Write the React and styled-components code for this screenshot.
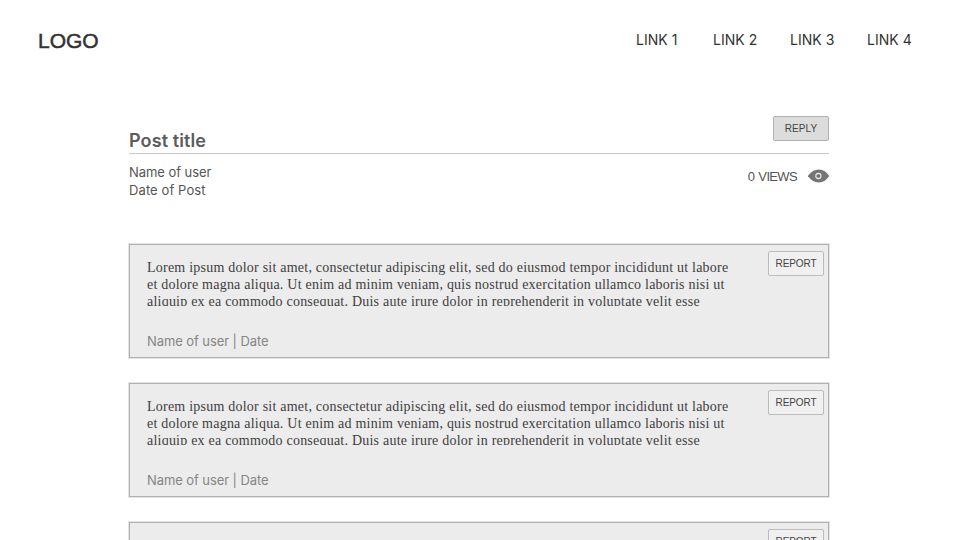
import React from 'react';
import styled, { createGlobalStyle } from 'styled-components';

const GlobalStyle = createGlobalStyle`
  * { box-sizing: border-box; }
  html, body { margin: 0; height: 100%; overflow: hidden; background: #fff; }
  body { font-family: Inter, "Liberation Sans", Arial, sans-serif; color: #333; }
`;

const Page = styled.div`
  height: 540px;
  overflow: hidden;
`;

const Header = styled.header`
  display: flex;
  justify-content: space-between;
  align-items: center;
  height: 80px;
  padding: 0 15px 0 38px;
`;

const Logo = styled.div`
  font-family: "Liberation Sans", Arial, sans-serif;
  font-size: 21px;
  line-height: 24px;
  padding-top: 1px;
  color: #333;
  -webkit-text-stroke: 0.5px #333;
`;

const Nav = styled.nav`
  display: grid;
  grid-template-columns: repeat(4, 77px);
`;

const NavLink = styled.a`
  font-size: 14px;
  line-height: 18px;
  letter-spacing: 0.05px;
  color: #333;
`;

const Main = styled.main`
  width: 700px;
  margin-left: 129px;
`;

const TitleBar = styled.div`
  display: flex;
  justify-content: space-between;
  align-items: flex-start;
  height: 74px;
  padding-top: 36px;
  border-bottom: 1px solid #c8c8c8;
`;

const Title = styled.h1`
  margin: 14px 0 0;
  font-size: 18px;
  font-weight: 600;
  line-height: 22px;
  letter-spacing: 0.1px;
  color: #5c5c5c;
`;

const Button = styled.button`
  width: 56px;
  height: 25px;
  padding: 0;
  flex: none;
  font: 10px "Liberation Sans", Arial, sans-serif;
  letter-spacing: ${(p) => (p.$filled ? '0.1px' : '-0.1px')};
  color: #444;
  background: ${(p) => (p.$filled ? '#dcdcdc' : '#f0f0f0')};
  border: 1px solid ${(p) => (p.$filled ? '#b0b0b0' : '#bcbcbc')};
  border-radius: 2px;
`;

const Meta = styled.div`
  display: flex;
  justify-content: space-between;
  height: 90px;
  padding-top: 9px;
  font-size: 13px;
  line-height: 18px;
  color: #555;
`;

const AuthorName = styled.div`
  letter-spacing: -0.05px;
`;

const PostDate = styled.div`
  letter-spacing: 0.1px;
`;

const Views = styled.div`
  display: flex;
  align-items: center;
  gap: 11px;
  height: 25px;
  margin: 1px -1px 0 0;
  font: 13px/18px "Liberation Sans", Arial, sans-serif;
  letter-spacing: -0.65px;
  word-spacing: 1px;
`;

const Posts = styled.section`
  display: flex;
  flex-direction: column;
  gap: 25px;
`;

const Card = styled.article`
  display: flex;
  justify-content: space-between;
  height: 114px;
  padding: 6px 4px 0 17px;
  background: #ececec;
  border: 1px solid #b0b0b0;
  box-shadow: 0 0 0 1px #e4e4e4;
`;

const Excerpt = styled.div`
  height: 47px;
  margin-top: 8px;
  overflow: hidden;
  white-space: nowrap;
  font: 14px/17px "Liberation Serif", "Times New Roman", serif;
  letter-spacing: 0.225px;
  color: #404040;
`;

const Byline = styled.div`
  margin-top: 26px;
  font-size: 13px;
  line-height: 18px;
  letter-spacing: -0.08px;
  color: #858585;
`;

const lines = [
  'Lorem ipsum dolor sit amet, consectetur adipiscing elit, sed do eiusmod tempor incididunt ut labore',
  'et dolore magna aliqua. Ut enim ad minim veniam, quis nostrud exercitation ullamco laboris nisi ut',
  'aliquip ex ea commodo consequat. Duis aute irure dolor in reprehenderit in voluptate velit esse',
];

const EyeIcon = styled.svg`
  margin-bottom: 2px;
`;

const Eye = () => (
  <EyeIcon width="22" height="14" viewBox="0 0 22 14">
    <path d="M-.2 7C3 2.6 6.6.5 10.7.5S18.4 2.6 21.3 7C18.4 11.4 14.8 13.5 10.7 13.5S3 11.4-.2 7Z" fill="#757575" />
    <circle cx="10.4" cy="7" r="2.6" fill="none" stroke="#eee" strokeWidth="1.1" />
  </EyeIcon>
);

const Post = () => (
  <Card>
    <div>
      <Excerpt>
        {lines.map((line) => (
          <div key={line}>{line}</div>
        ))}
      </Excerpt>
      <Byline>Name of user | Date</Byline>
    </div>
    <Button>REPORT</Button>
  </Card>
);

export default function App() {
  return (
    <Page>
      <GlobalStyle />
      <Header>
        <Logo>LOGO</Logo>
        <Nav>
          {[1, 2, 3, 4].map((n) => (
            <NavLink key={n}>LINK {n}</NavLink>
          ))}
        </Nav>
      </Header>
      <Main>
        <TitleBar>
          <Title>Post title</Title>
          <Button $filled>REPLY</Button>
        </TitleBar>
        <Meta>
          <div>
            <AuthorName>Name of user</AuthorName>
            <PostDate>Date of Post</PostDate>
          </div>
          <Views>
            0 VIEWS
            <Eye />
          </Views>
        </Meta>
        <Posts>
          <Post />
          <Post />
          <Post />
        </Posts>
      </Main>
    </Page>
  );
}
